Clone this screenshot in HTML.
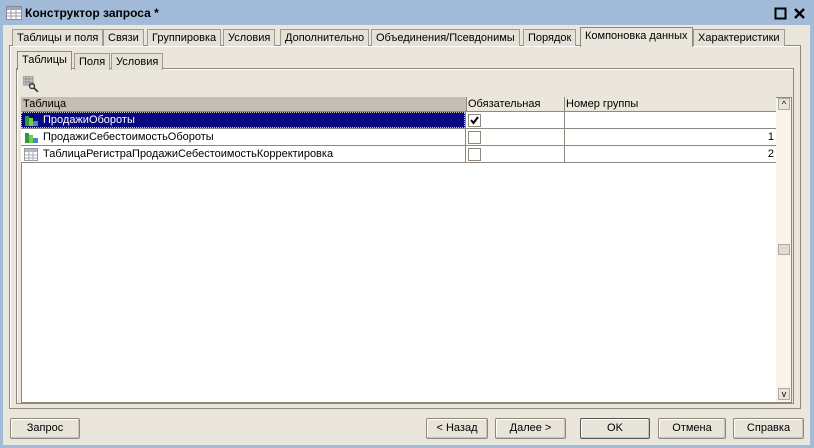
<!DOCTYPE html>
<html><head><meta charset="utf-8"><style>
*{box-sizing:border-box;margin:0;padding:0}
body{width:814px;height:448px;overflow:hidden;background:#a2bbd8;font-family:"Liberation Sans",sans-serif;font-size:11px;color:#000;position:relative}
.win{position:absolute;left:3px;top:25px;width:807px;height:420px;background:#ebe6dc}
.title{position:absolute;left:25px;top:6px;font-weight:bold;font-size:12px}
.abs{position:absolute}
.tab{position:absolute;height:17px;border:1px solid #a09a90;border-bottom:none;background:#e6e1d7;padding:2px 4px 0;white-space:nowrap;font-size:11px}
.panel{position:absolute;border:1px solid #8e887e;box-shadow:inset 1px 1px 0 #fff}
.btn{position:absolute;top:418px;height:21px;border:1px solid #8e887e;border-radius:2px;background:#e9e4da;text-align:center;line-height:19px;font-size:11px;box-shadow:inset -1px -1px 0 #c8c2b8,inset 1px 1px 0 #fff}
.row{position:absolute;left:21px;width:755px;height:17px;border-bottom:1px solid #8e887e;background:#fff}
.cb{position:absolute;left:447px;top:2px;width:13px;height:13px;border:1px solid #8e887e;background:#fff}
</style></head><body>
<svg class="abs" style="left:6px;top:6px" width="16" height="14"><rect x="0.5" y="0.5" width="15" height="13" fill="#fff" stroke="#889"/><rect x="1" y="1" width="14" height="3" fill="#9ab"/><path d="M1 7h14M1 10h14M5 4v10M10 4v10" stroke="#99a"/></svg>
<div class="title">Конструктор запроса *</div>
<svg class="abs" style="left:774px;top:7px" width="32" height="13"><rect x="1.5" y="1.5" width="10" height="10" fill="none" stroke="#000" stroke-width="2"/><path d="M21 2l9 9M30 2l-9 9" stroke="#000" stroke-width="2.3"/></svg>
<div class="win"></div>
<div class="panel" style="left:9px;top:45px;width:792px;height:364px"></div>
<div class="tab" style="left:12px;top:29px">Таблицы и поля</div>
<div class="tab" style="left:103px;top:29px">Связи</div>
<div class="tab" style="left:147px;top:29px">Группировка</div>
<div class="tab" style="left:223px;top:29px">Условия</div>
<div class="tab" style="left:280px;top:29px">Дополнительно</div>
<div class="tab" style="left:371px;top:29px">Объединения/Псевдонимы</div>
<div class="tab" style="left:523px;top:29px">Порядок</div>
<div class="tab" style="left:580px;top:27px;height:20px;background:#ebe6dc;border-color:#8e887e">Компоновка данных</div>
<div class="tab" style="left:693px;top:29px">Характеристики</div>
<div class="panel" style="left:16px;top:68px;width:778px;height:336px"></div>
<div class="tab" style="left:17px;top:51px;height:19px;background:#ebe6dc;border-color:#8e887e">Таблицы</div>
<div class="tab" style="left:74px;top:53px">Поля</div>
<div class="tab" style="left:111px;top:53px">Условия</div>
<svg class="abs" style="left:23px;top:76px" width="16" height="16"><rect x="0" y="0" width="10" height="9" fill="#ccc" stroke="#888" stroke-width="0.8"/><path d="M0 3h10M0 6h10M3 0v9M6 0v9" stroke="#777" stroke-width="0.7"/><circle cx="9" cy="10" r="2.5" fill="none" stroke="#333" stroke-width="1.3"/><path d="M11 12l4 4" stroke="#333" stroke-width="1.6"/></svg>
<div class="abs" style="left:21px;top:97px;width:771px;height:306px;background:#fff;border:1px solid #8e887e"></div>
<div class="abs" style="left:21px;top:97px;width:445px;height:15px;background:#c6beb2;border-bottom:1px solid #8e887e;padding:1px 2px">Таблица</div>
<div class="abs" style="left:466px;top:97px;width:98px;height:15px;background:#ebe6dc;border-left:1px solid #8e887e;border-bottom:1px solid #8e887e;padding:1px 1px">Обязательная</div>
<div class="abs" style="left:564px;top:97px;width:212px;height:15px;background:#ebe6dc;border-left:1px solid #8e887e;border-bottom:1px solid #8e887e;padding:1px 1px">Номер группы</div>
<div class="row" style="top:112px"><div class="abs" style="left:0;top:0;width:444px;height:16px;background:#0a0a80;color:#fff;outline:1px dotted #ccc;outline-offset:-1px;padding:2px 0 0 22px">ПродажиОбороты</div><div class="cb"><svg width="11" height="11" style="position:absolute;left:0;top:0"><path d="M2 5l2.5 3L9 2" stroke="#000" stroke-width="2" fill="none"/></svg></div></div>
<div class="row" style="top:129px"><div class="abs" style="left:22px;top:2px">ПродажиСебестоимостьОбороты</div><div class="cb"></div><div class="abs" style="right:2px;top:2px">1</div></div>
<div class="row" style="top:146px"><div class="abs" style="left:22px;top:2px">ТаблицаРегистраПродажиСебестоимостьКорректировка</div><div class="cb"></div><div class="abs" style="right:2px;top:2px">2</div></div>
<div class="abs" style="left:465px;top:112px;width:1px;height:51px;background:#8e887e"></div>
<div class="abs" style="left:564px;top:112px;width:1px;height:51px;background:#8e887e"></div>
<svg class="abs" style="left:24px;top:114px" width="15" height="48"><g><rect x="1" y="2" width="4" height="10" fill="#2a9a3a"/><rect x="5" y="4" width="4" height="8" fill="#7c4"/><rect x="9" y="7" width="5" height="5" fill="#48c"/></g><g transform="translate(0,17)"><rect x="1" y="2" width="4" height="10" fill="#2a9a3a"/><rect x="5" y="4" width="4" height="8" fill="#7c4"/><rect x="9" y="7" width="5" height="5" fill="#48c"/></g><g transform="translate(0,34)"><rect x="0.5" y="0.5" width="13" height="12" fill="#fff" stroke="#999"/><rect x="1" y="1" width="12" height="3" fill="#abc"/><path d="M1 7h12M1 10h12M5 4v9M9 4v9" stroke="#aab"/></g></svg>
<div class="abs" style="left:776px;top:98px;width:15px;height:304px;background:#fbf3e8"></div>
<div class="abs" style="left:778px;top:98px;width:12px;height:12px;border:1px solid #aaa;background:#e8e3d9;font-size:9px;line-height:11px;text-align:center">^</div>
<div class="abs" style="left:778px;top:244px;width:12px;height:11px;border:1px solid #aaa;background:#e0dbd1"></div>
<div class="abs" style="left:778px;top:388px;width:12px;height:12px;border:1px solid #aaa;background:#e8e3d9;font-size:9px;line-height:10px;text-align:center">v</div>
<div class="btn" style="left:10px;width:70px">Запрос</div>
<div class="btn" style="left:426px;width:62px">&lt; Назад</div>
<div class="btn" style="left:495px;width:71px">Далее &gt;</div>
<div class="btn" style="left:580px;width:70px;border-color:#555">OK</div>
<div class="btn" style="left:658px;width:68px">Отмена</div>
<div class="btn" style="left:733px;width:71px">Справка</div>
</body></html>
